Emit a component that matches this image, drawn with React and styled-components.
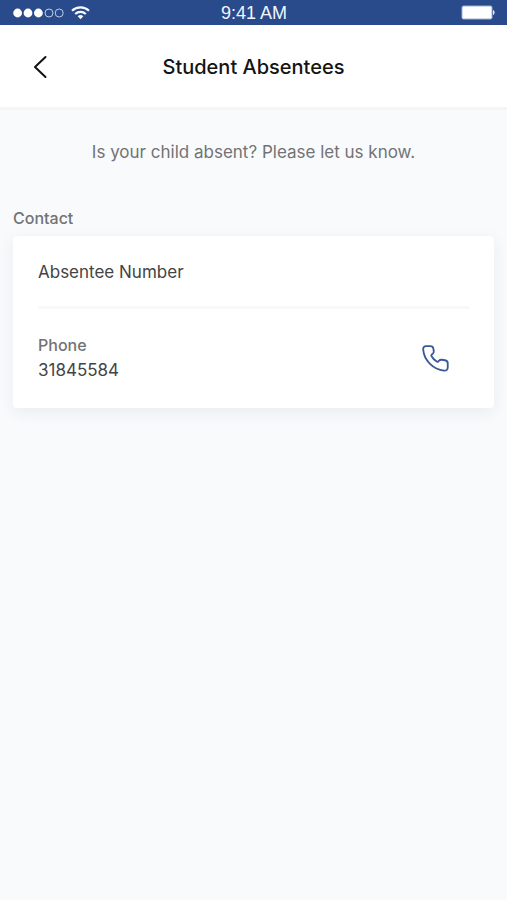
import React from "react";
import styled, { createGlobalStyle } from "styled-components";

const GlobalStyle = createGlobalStyle`
  *, *::before, *::after { box-sizing: border-box; }
  body {
    margin: 0;
    background: #f8fafc;
    font-family: Inter, "Liberation Sans", sans-serif;
  }
`;

const Screen = styled.div`
  display: flex;
  flex-direction: column;
  min-height: 100vh;
  background: #f8fafc;
`;

const StatusBar = styled.div`
  display: grid;
  grid-template-columns: 1fr auto 1fr;
  align-items: center;
  height: 25px;
  padding: 0 12px 0 13px;
  background: #294b8c;
  color: #f1f5fc;
`;

const Signal = styled.div`
  display: flex;
  align-items: center;
  gap: 7px;
`;

const Clock = styled.time`
  padding-top: 2px;
  font-family: "Liberation Sans", Arial, sans-serif;
  font-size: 18px;
  line-height: 23px;
`;

const Battery = styled.svg`
  justify-self: end;
`;

const Header = styled.header`
  display: grid;
  grid-template-columns: 48px 1fr 48px;
  align-items: center;
  height: 85px;
  padding: 2px 16px 0;
  background: #ffffff;
  border-bottom: 3px solid #f4f5f6;
`;

const BackButton = styled.button`
  display: flex;
  align-items: center;
  justify-content: center;
  height: 48px;
  padding: 0;
  border: 0;
  background: none;
  color: #111111;
  cursor: pointer;
`;

const Title = styled.h1`
  margin: 0;
  font-size: 20px;
  font-weight: 500;
  line-height: 24px;
  text-align: center;
  color: #141414;
`;

const Content = styled.main`
  display: flex;
  flex-direction: column;
  padding: 30px 13px;
`;

const Prompt = styled.p`
  margin: 0 0 42px;
  font-size: 17px;
  line-height: 24px;
  text-align: center;
  color: #727375;
`;

const SectionTitle = styled.h2`
  margin: 0 0 6px;
  font-size: 16px;
  font-weight: 500;
  line-height: 24px;
  color: #727375;
`;

const Card = styled.section`
  padding: 0 25px;
  border-radius: 4px;
  background: #ffffff;
  box-shadow: 0 4px 16px rgba(40, 60, 70, 0.07);
`;

const CardHeading = styled.h3`
  margin: 0;
  padding: 24px 0 22px;
  border-bottom: 3px solid #f8f8f9;
  font-size: 17px;
  font-weight: 400;
  line-height: 24px;
  color: #444444;
`;

const PhoneRow = styled.div`
  display: flex;
  align-items: center;
  justify-content: space-between;
  padding: 24px 12px 25px 0;
`;

const Details = styled.dl`
  margin: 0;
  line-height: 25px;
`;

const Label = styled.dt`
  font-size: 16px;
  font-weight: 500;
  color: #727375;
`;

const Value = styled.dd`
  margin: 0;
  font-size: 17px;
  color: #444444;
`;

const CallLink = styled.a`
  display: flex;
  padding: 8px;
  color: #3b5998;
`;

function SignalIcon() {
  return (
    <svg width="51" height="10" viewBox="0 0 51 10" aria-hidden="true">
      {[4.6, 15, 25.4].map((x) => (
        <circle key={x} cx={x} cy="5" r="4.4" fill="#ffffff" />
      ))}
      {[36, 46.2].map((x) => (
        <circle key={x} cx={x} cy="5" r="4" fill="none" stroke="#bccae5" strokeWidth="1" />
      ))}
    </svg>
  );
}

function WifiIcon() {
  return (
    <svg width="19" height="14" viewBox="0 0 19 14" fill="none" stroke="#f5f8ff" strokeWidth="2.2" aria-hidden="true">
      <path d="M1 4.7C5.8.2 13.2.2 18 4.7" />
      <path d="M4.2 8C7.2 5.2 11.8 5.2 14.8 8" />
      <path d="M6.7 10.2 9.5 13.2l2.8-3c-1.6-1.5-4-1.5-5.6 0Z" fill="#f5f8ff" stroke="none" />
    </svg>
  );
}

export default function App() {
  return (
    <>
      <GlobalStyle />
      <Screen>
        <StatusBar>
          <Signal>
            <SignalIcon />
            <WifiIcon />
          </Signal>
          <Clock>9:41 AM</Clock>
          <Battery width="34" height="15" viewBox="0 0 34 15" aria-hidden="true">
            <rect x="1" y="1" width="30" height="13" rx="1.5" fill="#ffffff" stroke="#9fb0d3" />
            <path d="M32 5c2.2.7 2.2 4.3 0 5Z" fill="#e2e9f6" />
          </Battery>
        </StatusBar>
        <Header>
          <BackButton type="button" aria-label="Back">
            <svg width="14" height="24" viewBox="0 0 14 24" fill="none" stroke="currentColor" strokeWidth="2" strokeLinecap="round" strokeLinejoin="round" aria-hidden="true">
              <path d="M12.500 2 2 12l10.500 10" />
            </svg>
          </BackButton>
          <Title>Student Absentees</Title>
        </Header>
        <Content>
          <Prompt>Is your child absent? Please let us know.</Prompt>
          <SectionTitle>Contact</SectionTitle>
          <Card>
            <CardHeading>Absentee Number</CardHeading>
            <PhoneRow>
              <Details>
                <Label>Phone</Label>
                <Value>31845584</Value>
              </Details>
              <CallLink href="tel:31845584" aria-label="Call 31845584">
                <svg width="27" height="27" viewBox="0 0 28 28" fill="none" stroke="currentColor" strokeWidth="1.9" strokeLinejoin="round" aria-hidden="true">
                  <path d="M4.200 1.200h4.600c1.700 0 2.700.9 3 2.600l.4 2.400c.2 1.300-.1 2-1 2.800l-1 .8c-.6.5-.7 1-.4 1.600 1.300 2.400 3.100 4.300 5.400 5.800.6.4 1.100.4 1.600-.1l.9-.9c.8-.8 1.600-1 2.800-.9l3.300.5c1.900.3 2.900 1.300 2.900 3v4.300c0 2.400-1.400 3.700-3.800 3.500C11.800 25.400 2.200 16.400 1.200 4.600 1 2.600 2.200 1.200 4.200 1.200Z" />
                </svg>
              </CallLink>
            </PhoneRow>
          </Card>
        </Content>
      </Screen>
    </>
  );
}
